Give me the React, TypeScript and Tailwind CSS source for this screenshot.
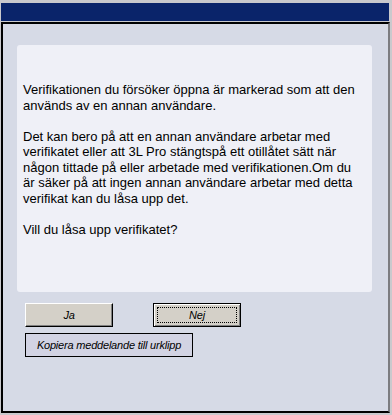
import React from 'react';

const font = { fontFamily: '"Liberation Sans", Arial, sans-serif' };

const Paragraph = ({ lines }: { lines: string[] }) => (
  <p className="whitespace-nowrap">
    {lines.map((line, i) => (
      <React.Fragment key={i}>
        {line}
        {i < lines.length - 1 && <br />}
      </React.Fragment>
    ))}
  </p>
);

export default function App() {
  return (
    <div
      className="flex h-[415px] w-[392px] flex-col bg-[#c9c9cd] pb-[2px] pl-px pr-[2px] pt-[3px] text-black"
      style={font}
    >
      <div className="mr-px h-[18px] shrink-0 bg-[#0a246a]" />
      <div className="mt-px flex flex-1 flex-col border-2 border-black border-r-[#7c7c80] bg-[#d6dae6] pl-[14px] pr-[16px] pt-[21px]">
        {/* message card */}
        <div className="flex h-[247px] flex-col gap-[15.5px] rounded-[3px] bg-[#eff0f7] pl-[6px] pt-[37px] text-[13px] leading-[15.5px]">
          <Paragraph
            lines={['Verifikationen du försöker öppna är markerad som att den', 'används av en annan användare.']}
          />
          <Paragraph
            lines={[
              'Det kan bero på att en annan användare arbetar med',
              'verifikatet eller att 3L Pro stängtspå ett otillåtet sätt när',
              'någon tittade på eller arbetade med verifikationen.Om du',
              'är säker på att ingen annan användare arbetar med detta',
              'verifikat kan du låsa upp det.',
            ]}
          />
          <Paragraph lines={['Vill du låsa upp verifikatet?']} />
        </div>

        <div className="ml-[8px] mt-[11px] flex flex-col gap-[6px] text-[11px] italic tracking-[-0.2px]">
          <div className="flex gap-[40px]">
            <button className="flex h-[24px] w-[88px] items-center justify-center border border-b-black border-l-white border-r-black border-t-white bg-[#d4d0c8] shadow-[inset_-1px_-1px_0_#808080]">
              Ja
            </button>
            <button className="flex h-[24px] w-[88px] border border-black bg-[#d4d0c8] p-[3px] shadow-[inset_1px_1px_0_#ffffff,inset_-1px_-1px_0_#808080]">
              <span className="flex flex-1 items-center justify-center border border-dotted border-black">Nej</span>
            </button>
          </div>
          <button className="flex h-[24px] w-[168px] items-center justify-center border border-black bg-[#d2d3e3]">
            Kopiera meddelande till urklipp
          </button>
        </div>
      </div>
    </div>
  );
}
